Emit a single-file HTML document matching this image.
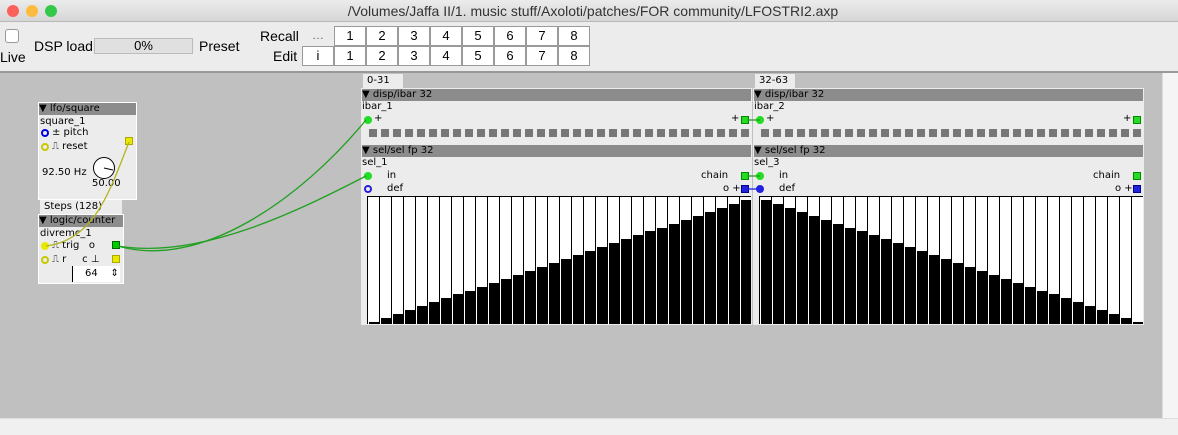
<!DOCTYPE html><html><head><style>
*{margin:0;padding:0;box-sizing:border-box}
body{width:1178px;height:435px;overflow:hidden;background:#ececec;font-family:"Liberation Sans",sans-serif;position:relative}
.a{position:absolute}
.t{font-family:"DejaVu Sans","Liberation Sans",sans-serif;font-size:10px;color:#000;white-space:nowrap}
.hd{background:#8c8c8c;color:#000}
.btn{position:absolute;background:#fff;border:1px solid #9a9a9a;font-size:13px;text-align:center;line-height:18px}
.dot{position:absolute;width:8px;height:8px;border-radius:50%}
.sq{position:absolute;width:8px;height:8px}
</style></head><body>
<div class="a" style="left:0;top:0;width:1178px;height:22px;background:linear-gradient(#ececec,#d6d6d6);border-bottom:1px solid #b8b8b8"></div>
<div class="dot" style="left:7px;top:5px;width:12px;height:12px;background:#fc605b"></div>
<div class="dot" style="left:26px;top:5px;width:12px;height:12px;background:#fdbc40"></div>
<div class="dot" style="left:45px;top:5px;width:12px;height:12px;background:#34c84a"></div>
<div class="a" style="left:0;width:1178px;top:3px;text-align:center;font-size:14px;color:#333;padding-left:8px">/Volumes/Jaffa II/1. music stuff/Axoloti/patches/FOR community/LFOSTRI2.axp</div>
<div class="a" style="left:5px;top:29px;width:14px;height:14px;border:1px solid #999;border-radius:3px;background:#fff"></div>
<div class="a" style="left:0;top:49px;font-size:14px">Live</div>
<div class="a" style="left:34px;top:38px;font-size:14px">DSP load</div>
<div class="a" style="left:94px;top:38px;width:99px;height:16px;background:#e0e0e0;border:1px solid #bbb;font-size:13px;text-align:center;line-height:14px">0%</div>
<div class="a" style="left:199px;top:38px;font-size:14px">Preset</div>
<div class="a" style="left:260px;top:28px;font-size:14px">Recall</div>
<div class="a" style="left:273px;top:48px;font-size:14px">Edit</div>
<div class="a" style="left:312px;top:28px;font-size:12px;color:#666">…</div>
<div id="bt"></div>
<div class="a" style="left:0;top:71px;width:1178px;height:2px;background:#999"></div>
<div class="a" style="left:0;top:73px;width:1162px;height:345px;background:#c0c0c0"></div>
<div class="a" style="left:1162px;top:73px;width:16px;height:345px;background:#f5f5f5;border-left:1px solid #ddd"></div>
<div class="a" style="left:0;top:418px;width:1178px;height:17px;background:#f0f0f0;border-top:1px solid #ddd"></div>

<div class="a" style="left:38px;top:102px;width:99px;height:98px;background:#ececec;border:1px solid #fff"></div>
<div class="a t hd" style="left:39px;top:103px;width:97px;height:12px;line-height:12px">▼ lfo/square</div>
<div class="a t" style="left:40px;top:116px">square_1</div>
<div class="dot" style="left:41px;top:129px;border:2px solid #0000e0"></div><div class="a t" style="left:52px;top:127px">± pitch</div>
<div class="dot" style="left:41px;top:143px;border:2px solid #c8c800"></div><div class="a t" style="left:52px;top:141px">⎍ reset</div>
<div class="sq" style="left:125px;top:137px;background:#e8e800;border:1px solid #aa0"></div>
<div class="a t" style="left:42px;top:167px">92.50 Hz</div>
<div class="a" style="left:93px;top:157px;width:22px;height:22px;border-radius:50%;border:1px solid #000;background:#fff"></div>
<div class="a t" style="left:92px;top:178px">50.00</div>
<div class="a t" style="left:40px;top:200px;width:82px;height:14px;background:#ececec;padding:1px 4px">Steps (128)</div>
<div class="a" style="left:38px;top:214px;width:86px;height:70px;background:#ececec;border:1px solid #fff"></div>
<div class="a t hd" style="left:39px;top:215px;width:84px;height:12px;line-height:12px">▼ logic/counter</div>
<div class="a t" style="left:40px;top:228px">divremc_1</div>
<div class="dot" style="left:41px;top:242px;background:#e8e800"></div><div class="a t" style="left:52px;top:240px">⎍ trig &nbsp;&nbsp;o</div>
<div class="sq" style="left:112px;top:241px;background:#0c0;border:1px solid #060"></div>
<div class="dot" style="left:41px;top:256px;border:2px solid #c8c800"></div><div class="a t" style="left:52px;top:254px">⎍ r &nbsp;&nbsp;&nbsp;&nbsp;c ⊥</div>
<div class="sq" style="left:112px;top:255px;background:#e8e800;border:1px solid #aa0"></div>
<div class="a t" style="left:72px;top:266px;width:48px;height:16px;background:#fff;border-left:1px solid #000;font-size:10px;padding:2px 0 0 12px">64 &nbsp;&nbsp;&nbsp;⇕</div>

<div id="pn"></div>
<svg class="a" style="left:0;top:0" width="1178" height="435">
<path d="M129,142 C110,190 95,240 46,246" stroke="#b4b420" stroke-width="1.3" fill="none"/>
<path d="M118,246 C200,270 300,200 366,120" stroke="#20a020" stroke-width="1.3" fill="none"/>
<path d="M118,246 C200,260 300,210 366,176" stroke="#20a020" stroke-width="1.3" fill="none"/>
<line x1="104" y1="168" x2="113" y2="170" stroke="#000"/>
<line x1="747" y1="120" x2="760" y2="120" stroke="#20a020" stroke-width="1.3"/>
<line x1="747" y1="176" x2="760" y2="176" stroke="#20a020" stroke-width="1.3"/>
<line x1="747" y1="189" x2="760" y2="189" stroke="#2020e0" stroke-width="1.3"/>
</svg>
<script>
var h='';
var xs=[334,366,398,430,462,494,526,558];
for(var i=0;i<8;i++){h+='<div class="btn" style="left:'+xs[i]+'px;top:26px;width:32px;height:20px">'+(i+1)+'</div>';h+='<div class="btn" style="left:'+xs[i]+'px;top:46px;width:32px;height:20px">'+(i+1)+'</div>';}
h+='<div class="btn" style="left:302px;top:46px;width:32px;height:20px">i</div>';
document.getElementById('bt').innerHTML=h;
var p='';
function panel(x,n,t1,t2,t3,dir){
 p+='<div class="a t" style="left:'+(x+2)+'px;top:74px;width:40px;height:14px;background:#ececec;padding:1px 4px">'+t1+'</div>';
 p+='<div class="a" style="left:'+x+'px;top:88px;width:391px;height:237px;background:#ececec"></div>';
 p+='<div class="a t hd" style="left:'+(x+1)+'px;top:89px;width:389px;height:12px;line-height:12px">▼ disp/ibar 32</div>';
 p+='<div class="a t" style="left:'+(x+1)+'px;top:101px">'+t2+'</div>';
 p+='<div class="dot" style="left:'+(x+3)+'px;top:116px;background:#2d2"></div><div class="a t" style="left:'+(x+13)+'px;top:113px">+</div>';
 p+='<div class="a t" style="left:'+(x+370)+'px;top:113px">+</div><div class="sq" style="left:'+(x+380)+'px;top:116px;background:#2d2;border:1px solid #080"></div>';
 for(var i=0;i<32;i++)p+='<div class="a" style="left:'+(x+8+i*12)+'px;top:129px;width:8px;height:8px;background:#777"></div>';
 p+='<div class="a t hd" style="left:'+(x+1)+'px;top:145px;width:389px;height:12px;line-height:12px">▼ sel/sel fp 32</div>';
 p+='<div class="a t" style="left:'+(x+1)+'px;top:157px">'+t3+'</div>';
 p+='<div class="dot" style="left:'+(x+3)+'px;top:172px;background:#2d2"></div><div class="a t" style="left:'+(x+26)+'px;top:170px">in</div>';
 p+='<div class="a t" style="left:'+(x+340)+'px;top:170px">chain</div><div class="sq" style="left:'+(x+380)+'px;top:172px;background:#2d2;border:1px solid #080"></div>';
 p+='<div class="dot" style="left:'+(x+3)+'px;top:185px;'+(dir?'border:2px solid #22d':'background:#22d')+'"></div><div class="a t" style="left:'+(x+26)+'px;top:183px">def</div>';
 p+='<div class="a t" style="left:'+(x+362)+'px;top:183px">o +</div><div class="sq" style="left:'+(x+380)+'px;top:185px;background:#22d;border:1px solid #008"></div>';
 p+='<div class="a" style="left:'+(x+6)+'px;top:196px;width:384px;height:128px;background:#fff;border-top:1px solid #000"></div>';
 for(var i=0;i<32;i++){var v=dir?(i/31):(1-i/31);var hh=Math.round(2+v*122);
  p+='<div class="a" style="left:'+(x+6+i*12)+'px;top:197px;width:1px;height:127px;background:#000"></div>';
  p+='<div class="a" style="left:'+(x+8+i*12)+'px;top:'+(324-hh)+'px;width:10px;height:'+hh+'px;background:#000;box-shadow:0 -1px 0 #fff"></div>';}
}
panel(361,0,'0-31','ibar_1','sel_1',1);
panel(753,1,'32-63','ibar_2','sel_3',0);
document.getElementById('pn').innerHTML=p;
</script>
</body></html>
